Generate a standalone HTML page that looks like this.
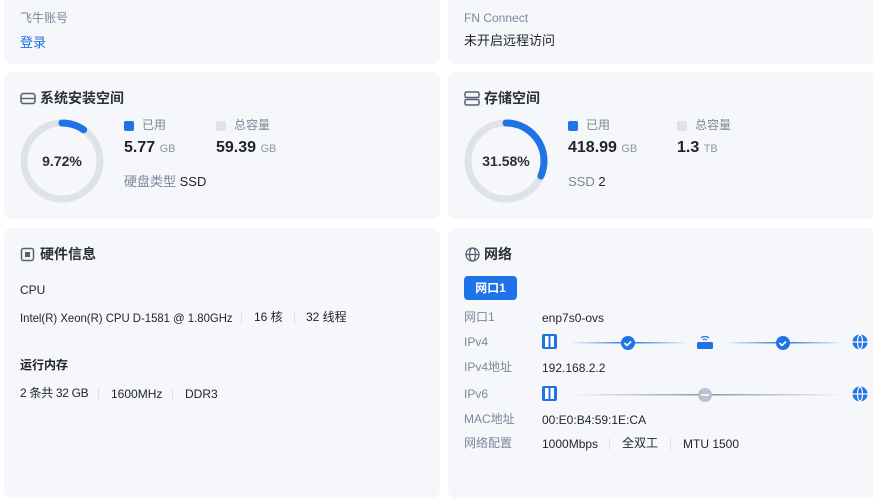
<!DOCTYPE html>
<html><head><meta charset="utf-8"><style>
*{margin:0;padding:0;box-sizing:border-box}
body{width:873px;height:490px;background:#fff;font-family:"Liberation Sans","Noto Sans CJK SC",sans-serif;position:relative;overflow:hidden;color:#1f2329;line-height:1.2}
.card{position:absolute;background:#f5f7fb;border-radius:8px}
.t{position:absolute;white-space:nowrap}
.g{color:#7d8799}
.h{font-size:14px;font-weight:bold;color:#2b2f36}
.s12{font-size:12px}.s13{font-size:13px}
.big{font-size:16px;font-weight:bold}
.u{font-size:11px;color:#8d97a8;font-weight:normal}
.sep{position:absolute;width:1px;height:12px;background:#dde1e8}
</style></head><body>
<div class="card" style="left:4px;top:-8px;width:436px;height:72px"></div>
<div class="card" style="left:448px;top:-8px;width:430px;height:72px"></div>
<div class="t s12 g" style="left:20px;top:11px">飞牛账号</div>
<div class="t s13" style="left:20px;top:35px;color:#1d6ee0">登录</div>
<div class="t s12 g" style="left:464px;top:11px">FN Connect</div>
<div class="t s13" style="left:464px;top:33px">未开启远程访问</div>

<div class="card" style="left:4px;top:72px;width:436px;height:147px"></div>
<div class="card" style="left:448px;top:72px;width:430px;height:147px"></div>
<svg class="t" style="left:20px;top:92px" width="16" height="13" viewBox="0 0 16 13"><rect x="1" y="1.5" width="14" height="10" rx="2.5" fill="none" stroke="#5a6170" stroke-width="1.6"/><line x1="1" y1="6.5" x2="15" y2="6.5" stroke="#5a6170" stroke-width="1.4"/></svg>
<div class="t h" style="left:40px;top:90px">系统安装空间</div>
<svg class="t" style="left:20px;top:119px" width="84" height="84"><circle cx="42" cy="42" r="38" fill="none" stroke="#dfe2e8" stroke-width="7"/><circle cx="42" cy="42" r="38" fill="none" stroke="#1e74e6" stroke-width="7" stroke-linecap="round" stroke-dasharray="23 300" transform="rotate(-90 42 42)"/></svg>
<div class="t" style="left:20px;top:153px;width:84px;text-align:center;font-size:14px;font-weight:bold;color:#2b2f36">9.72%</div>
<div class="t" style="left:124px;top:121px;width:10px;height:10px;background:#1e74e6;border-radius:2px"></div>
<div class="t s12 g" style="left:142px;top:118px">已用</div>
<div class="t" style="left:216px;top:121px;width:10px;height:10px;background:#dfe2e8;border-radius:2px"></div>
<div class="t s12 g" style="left:234px;top:118px">总容量</div>
<div class="t big" style="left:124px;top:138px">5.77 <span class="u">GB</span></div>
<div class="t big" style="left:216px;top:138px">59.39 <span class="u">GB</span></div>
<div class="t s13" style="left:124px;top:174px"><span class="g">硬盘类型</span> SSD</div>

<svg class="t" style="left:464px;top:91px" width="16" height="15" viewBox="0 0 16 15"><rect x="1" y="1" width="14" height="5.5" rx="1.5" fill="none" stroke="#5a6170" stroke-width="1.5"/><rect x="1" y="8.5" width="14" height="5.5" rx="1.5" fill="none" stroke="#5a6170" stroke-width="1.5"/></svg>
<div class="t h" style="left:484px;top:90px">存储空间</div>
<svg class="t" style="left:464px;top:119px" width="84" height="84"><circle cx="42" cy="42" r="38" fill="none" stroke="#dfe2e8" stroke-width="7"/><circle cx="42" cy="42" r="38" fill="none" stroke="#1e74e6" stroke-width="7" stroke-linecap="round" stroke-dasharray="75 300" transform="rotate(-90 42 42)"/></svg>
<div class="t" style="left:464px;top:153px;width:84px;text-align:center;font-size:14px;font-weight:bold;color:#2b2f36">31.58%</div>
<div class="t" style="left:568px;top:121px;width:10px;height:10px;background:#1e74e6;border-radius:2px"></div>
<div class="t s12 g" style="left:586px;top:118px">已用</div>
<div class="t" style="left:677px;top:121px;width:10px;height:10px;background:#dfe2e8;border-radius:2px"></div>
<div class="t s12 g" style="left:695px;top:118px">总容量</div>
<div class="t big" style="left:568px;top:138px">418.99 <span class="u">GB</span></div>
<div class="t big" style="left:677px;top:138px">1.3 <span class="u">TB</span></div>
<div class="t s13" style="left:568px;top:174px"><span class="g">SSD</span> 2</div>

<div class="card" style="left:4px;top:228px;width:436px;height:270px"></div>
<div class="card" style="left:448px;top:228px;width:430px;height:270px"></div>
<svg class="t" style="left:20px;top:247px" width="15" height="15" viewBox="0 0 15 15"><rect x="1.5" y="1.5" width="12" height="12" rx="2" fill="none" stroke="#5a6170" stroke-width="1.5"/><rect x="5" y="5" width="5" height="5" fill="#5a6170"/></svg>
<div class="t h" style="left:40px;top:246px">硬件信息</div>
<div class="t s12" style="left:20px;top:283px">CPU</div>
<div class="t" style="left:20px;top:311px;font-size:12px;transform:scaleX(0.945);transform-origin:left">Intel(R) Xeon(R) CPU D-1581 @ 1.80GHz</div>
<div class="sep" style="left:241px;top:312px"></div>
<div class="t s12" style="left:254px;top:310px">16 核</div>
<div class="sep" style="left:294px;top:312px"></div>
<div class="t s12" style="left:306px;top:310px">32 线程</div>
<div class="t s12" style="left:20px;top:358px;font-weight:bold">运行内存</div>
<div class="t s12" style="left:20px;top:386px;letter-spacing:-0.3px">2 条共 32 GB</div>
<div class="sep" style="left:98px;top:388px"></div>
<div class="t s12" style="left:111px;top:387px">1600MHz</div>
<div class="sep" style="left:172px;top:388px"></div>
<div class="t s12" style="left:185px;top:387px">DDR3</div>

<svg class="t" style="left:465px;top:247px" width="15" height="15" viewBox="0 0 15 15" fill="none" stroke="#5a6170" stroke-width="1.3"><circle cx="7.5" cy="7.5" r="6.5"/><ellipse cx="7.5" cy="7.5" rx="3" ry="6.5"/><line x1="1" y1="7.5" x2="14" y2="7.5"/></svg>
<div class="t h" style="left:484px;top:246px">网络</div>
<div class="t" style="left:464px;top:276px;width:53px;height:24px;background:#1e74e6;border-radius:4px;color:#fff;font-size:12px;font-weight:bold;text-align:center;line-height:24px">网口1</div>
<div class="t s12 g" style="left:464px;top:310px">网口1</div>
<div class="t s12" style="left:542px;top:311px">enp7s0-ovs</div>
<div class="t s12 g" style="left:464px;top:335px">IPv4</div>
<div class="t s12 g" style="left:464px;top:360px">IPv4地址</div>
<div class="t s12" style="left:542px;top:361px">192.168.2.2</div>
<div class="t s12 g" style="left:464px;top:387px">IPv6</div>
<div class="t s12 g" style="left:464px;top:412px">MAC地址</div>
<div class="t s12" style="left:542px;top:413px">00:E0:B4:59:1E:CA</div>
<div class="t s12 g" style="left:464px;top:436px">网络配置</div>
<div class="t s12" style="left:542px;top:437px">1000Mbps</div>
<div class="sep" style="left:609px;top:438px"></div>
<div class="t s12" style="left:622px;top:436px">全双工</div>
<div class="sep" style="left:670px;top:438px"></div>
<div class="t s12" style="left:683px;top:437px">MTU 1500</div>

<svg class="t" style="left:540px;top:330px" width="333" height="80">
<defs><linearGradient id="l" x1="0" x2="1"><stop offset="0" stop-color="#1e74e6" stop-opacity="0"/><stop offset="0.5" stop-color="#1e74e6"/><stop offset="1" stop-color="#1e74e6" stop-opacity="0"/></linearGradient>
<linearGradient id="l2" x1="0" x2="1"><stop offset="0" stop-color="#8a93a5" stop-opacity="0"/><stop offset="0.5" stop-color="#8a93a5"/><stop offset="1" stop-color="#8a93a5" stop-opacity="0"/></linearGradient></defs>
<rect x="2" y="4" width="15" height="15" rx="2" fill="#1e74e6"/><rect x="5" y="6" width="3.5" height="11" fill="#fff"/><rect x="10.5" y="6" width="3.5" height="11" fill="#fff"/>
<rect x="30" y="12" width="118" height="1.5" fill="url(#l)"/>
<rect x="185" y="12" width="118" height="1.5" fill="url(#l)"/>
<circle cx="88" cy="13" r="7" fill="#1e74e6"/><path d="M84.5 13l2.5 2.5 4-4" stroke="#fff" stroke-width="1.6" fill="none"/>
<circle cx="243" cy="13" r="7" fill="#1e74e6"/><path d="M239.5 13l2.5 2.5 4-4" stroke="#fff" stroke-width="1.6" fill="none"/>
<rect x="157" y="12" width="16" height="7" rx="1.5" fill="#1e74e6"/><path d="M161 8a6 6 0 0 1 8 0M163 10a3 3 0 0 1 4 0" stroke="#1e74e6" stroke-width="1.3" fill="none"/>
<circle cx="320" cy="12" r="7.5" fill="#1e74e6"/><ellipse cx="320" cy="12" rx="2.5" ry="7" fill="none" stroke="#fff" stroke-width="1.2"/><line x1="312.5" y1="12" x2="327.5" y2="12" stroke="#fff" stroke-width="1.2"/>
<rect x="2" y="56" width="15" height="15" rx="2" fill="#1e74e6"/><rect x="5" y="58" width="3.5" height="11" fill="#fff"/><rect x="10.5" y="58" width="3.5" height="11" fill="#fff"/>
<rect x="30" y="64" width="275" height="1.5" fill="url(#l2)"/>
<circle cx="165" cy="65" r="7" fill="#b8c1cf"/><line x1="161" y1="65" x2="169" y2="65" stroke="#fff" stroke-width="1.6"/>
<circle cx="320" cy="64" r="7.5" fill="#1e74e6"/><ellipse cx="320" cy="64" rx="2.5" ry="7" fill="none" stroke="#fff" stroke-width="1.2"/><line x1="312.5" y1="64" x2="327.5" y2="64" stroke="#fff" stroke-width="1.2"/>
</svg>
</body></html>
